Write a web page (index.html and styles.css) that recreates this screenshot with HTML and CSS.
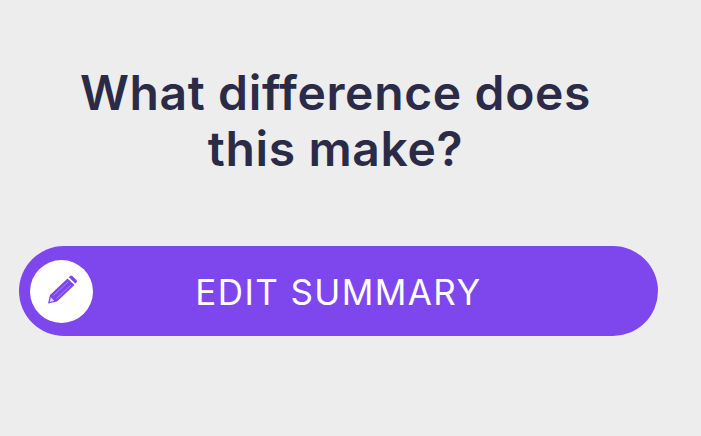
FILE: index.html
```html
<!DOCTYPE html>
<html lang="en">

<head>
    <meta charset="UTF-8">
    <meta name="viewport" content="width=device-width, initial-scale=1.0">
    <title>What difference does this make?</title>
    <link rel="stylesheet" href="styles.css">
</head>

<body>
    <div class="panel">
        <h1 class="question">What difference does<br>this make?</h1>
        <a href="#" class="bouton-edit">
            <span class="bouton-icone">
                <svg viewBox="0 0 32 32" width="32" height="32">
                    <path d="M2 28.500l2-8.500L21.500 3.500l7 6.500L11 26.500z" fill="#7e47ee"/>
                    <path d="M22.800 2.300l1-1a2 2 0 0 1 2.800 0l3.700 3.500a2 2 0 0 1 0 2.800l-1 1z" fill="#7e47ee"/>
                    <path d="M7.500 20.500L22 7M10.500 23.500L25 10" stroke="#a988f2" stroke-width="1" fill="none"/>
                    <path d="M3.700 27l1.100-4.500 3.400 3.300z" fill="#e4d9fb"/>
                </svg>
            </span>
            <span class="bouton-texte">EDIT SUMMARY</span>
        </a>
    </div>
</body>

</html>
```

FILE: styles.css
```css
html, body {
    margin: 0;
    padding: 0;
}

body {
    width: 701px;
    height: 436px;
    overflow: hidden;
    background-color: #ededed;
    font-family: Inter, "Liberation Sans", sans-serif;
}

.panel {
    padding: 65px 43px 0 19px;
}

.question {
    margin: 0 0 69px;
    padding-right: 6px;
    text-align: center;
    font-size: 48px;
    line-height: 56px;
    font-weight: 600;
    letter-spacing: 0.65px;
    color: #2b2b47;
}

.bouton-edit {
    display: flex;
    align-items: center;
    height: 90px;
    padding: 0 11px;
    border-radius: 45px;
    background-color: #7e47ee;
    color: #fff;
    text-decoration: none;
}

.bouton-icone {
    display: flex;
    align-items: center;
    justify-content: center;
    width: 63px;
    height: 63px;
    border-radius: 50%;
    background-color: #fff;
}

.bouton-texte {
    flex: 1;
    margin-right: 63px;
    padding-top: 2px;
    text-align: center;
    font-size: 35px;
    letter-spacing: 1.4px;
}
```
